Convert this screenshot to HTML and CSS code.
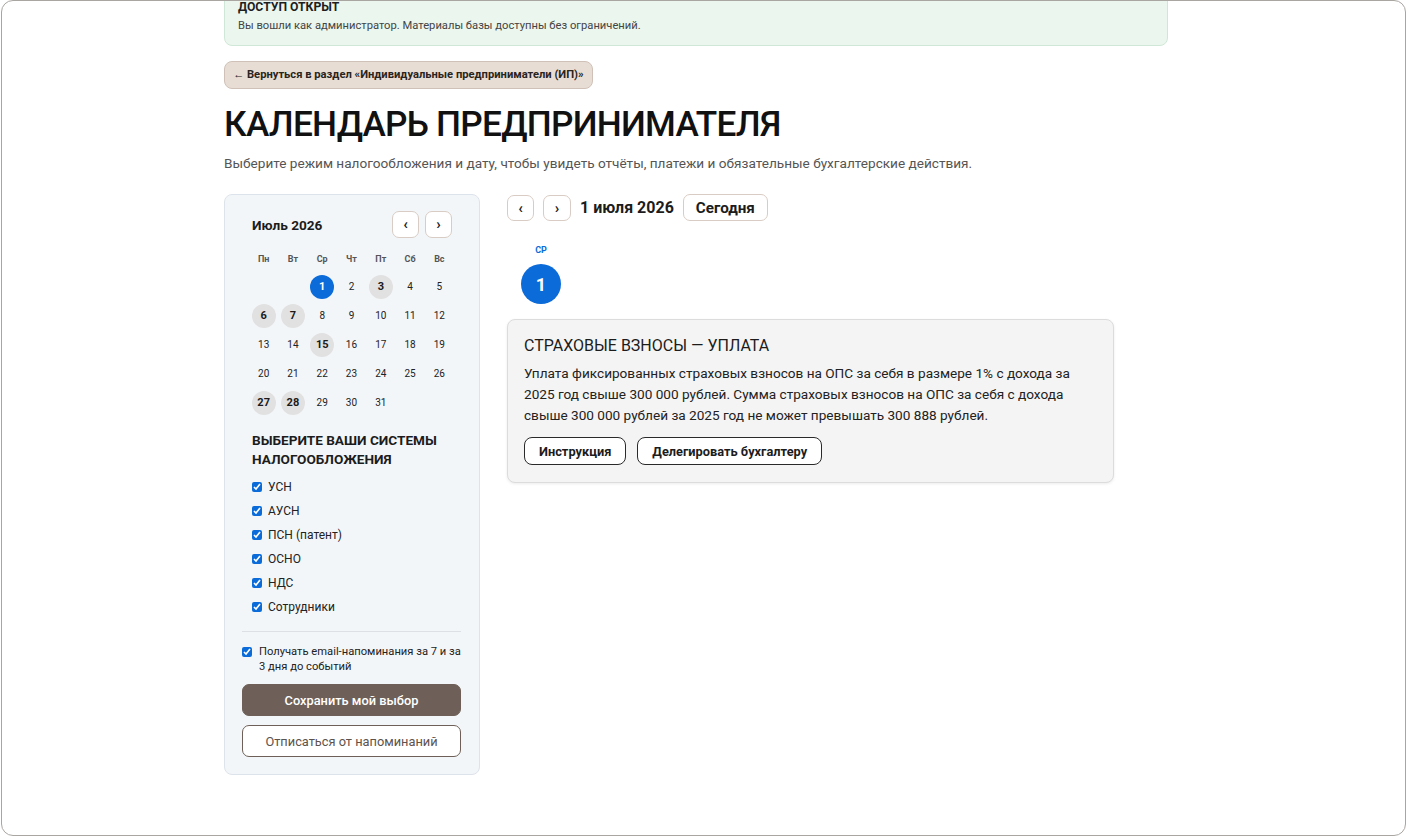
FILE: index.html
```html
<!DOCTYPE html>
<html lang="ru">
<head>
    <meta charset="UTF-8">
    <meta name="viewport" content="width=device-width, initial-scale=1.0">
    <title>Календарь предпринимателя</title>
    <link rel="stylesheet" href="styles.css">
</head>
<body>
    <div class="frame">
        <div class="page">
            <div class="notice">
                <div class="notice-title">ДОСТУП ОТКРЫТ</div>
                <div class="notice-text">Вы вошли как администратор. Материалы базы доступны без ограничений.</div>
            </div>

            <a class="back-link" href="#">← Вернуться в раздел «Индивидуальные предприниматели (ИП)»</a>

            <h1>КАЛЕНДАРЬ ПРЕДПРИНИМАТЕЛЯ</h1>
            <p class="lead">Выберите режим налогообложения и дату, чтобы увидеть отчёты, платежи и обязательные бухгалтерские действия.</p>

            <div class="layout">
                <aside class="sidebar">
                    <div class="mini-cal">
                        <div class="mini-head">
                            <span class="mini-title">Июль 2026</span>
                            <div class="mini-nav">
                                <button class="nav-btn">‹</button>
                                <button class="nav-btn">›</button>
                            </div>
                        </div>
                        <div class="mini-grid">
                            <span class="wd">Пн</span><span class="wd">Вт</span><span class="wd">Ср</span><span class="wd">Чт</span><span class="wd">Пт</span><span class="wd">Сб</span><span class="wd">Вс</span>
                            <span class="day"></span><span class="day"></span>
                            <span class="day"><b class="selected">1</b></span>
                            <span class="day">2</span>
                            <span class="day"><b class="has-event">3</b></span>
                            <span class="day">4</span><span class="day">5</span>
                            <span class="day"><b class="has-event">6</b></span>
                            <span class="day"><b class="has-event">7</b></span>
                            <span class="day">8</span><span class="day">9</span><span class="day">10</span><span class="day">11</span><span class="day">12</span>
                            <span class="day">13</span><span class="day">14</span>
                            <span class="day"><b class="has-event">15</b></span>
                            <span class="day">16</span><span class="day">17</span><span class="day">18</span><span class="day">19</span>
                            <span class="day">20</span><span class="day">21</span><span class="day">22</span><span class="day">23</span><span class="day">24</span><span class="day">25</span><span class="day">26</span>
                            <span class="day"><b class="has-event">27</b></span>
                            <span class="day"><b class="has-event">28</b></span>
                            <span class="day">29</span><span class="day">30</span><span class="day">31</span>
                        </div>
                    </div>

                    <h3 class="systems-title">ВЫБЕРИТЕ ВАШИ СИСТЕМЫ НАЛОГООБЛОЖЕНИЯ</h3>
                    <div class="systems">
                        <label><input type="checkbox" checked> УСН</label>
                        <label><input type="checkbox" checked> АУСН</label>
                        <label><input type="checkbox" checked> ПСН (патент)</label>
                        <label><input type="checkbox" checked> ОСНО</label>
                        <label><input type="checkbox" checked> НДС</label>
                        <label><input type="checkbox" checked> Сотрудники</label>
                    </div>

                    <div class="divider"></div>

                    <label class="remind"><input type="checkbox" checked> <span>Получать email-напоминания за 7 и за 3 дня до событий</span></label>

                    <button class="btn-save">Сохранить мой выбор</button>
                    <button class="btn-unsub">Отписаться от напоминаний</button>
                </aside>

                <main class="day-view">
                    <div class="day-toolbar">
                        <button class="tool-btn">‹</button>
                        <button class="tool-btn">›</button>
                        <span class="day-date">1 июля 2026</span>
                        <button class="today-btn">Сегодня</button>
                    </div>

                    <div class="day-col">
                        <div class="day-name">СР</div>
                        <div class="day-num">1</div>
                    </div>

                    <div class="event">
                        <div class="event-title">СТРАХОВЫЕ ВЗНОСЫ — УПЛАТА</div>
                        <p class="event-text">Уплата фиксированных страховых взносов на ОПС за себя в размере 1% с дохода за 2025 год свыше 300 000 рублей. Сумма страховых взносов на ОПС за себя с дохода свыше 300 000 рублей за 2025 год не может превышать 300 888 рублей.</p>
                        <div class="event-actions">
                            <button class="outline-btn">Инструкция</button>
                            <button class="outline-btn">Делегировать бухгалтеру</button>
                        </div>
                    </div>
                </main>
            </div>
        </div>
    </div>
</body>
</html>
```

FILE: styles.css
```css
* { box-sizing: border-box; }

body {
    margin: 0;
    font-family: Roboto, "Noto Sans", Arial, sans-serif;
    color: #1c1c1c;
    background: #fff;
}

.frame {
    width: 1405px;
    height: 836px;
    margin-left: 1px;
    border: 1px solid #a9a5a1;
    border-radius: 12px;
    overflow: hidden;
    background: #fff;
}

.page {
    width: 944px;
    margin-left: 222px;
    margin-top: -15px;
}

/* access banner */
.notice {
    background: #ebf6ee;
    border: 1px solid #cfe7d6;
    border-radius: 8px;
    padding: 12px 13px 11px;
}
.notice-title { font-size: 12.2px; font-weight: 700; line-height: 16px; color: #1e1e1e; }
.notice-text { font-size: 11.2px; line-height: 16px; color: #444; margin-top: 3px; }

.back-link {
    display: inline-block;
    margin-top: 15px;
    height: 28px;
    line-height: 26px;
    padding: 0 8px;
    background: #e8ddd5;
    border: 1px solid #cfc1b7;
    border-radius: 8px;
    font-size: 11.2px;
    font-weight: 700;
    color: #2a2420;
    text-decoration: none;
}

h1 {
    margin: 13px 0 0;
    font-size: 35.2px;
    line-height: 44px;
    font-weight: 500;
    color: #111;
    letter-spacing: -0.75px;
}

.lead {
    margin: 7px 0 0;
    font-size: 13.6px;
    line-height: 20px;
    color: #555;
}

.layout {
    display: flex;
    align-items: flex-start;
    gap: 27px;
    margin-top: 21px;
}

/* sidebar */
.sidebar {
    width: 256px;
    flex-shrink: 0;
    background: #f3f6f9;
    border: 1px solid #dde3ea;
    border-radius: 8px;
    padding: 16px 18px 17px 17px;
}

.mini-cal { padding: 0 7px; }
.mini-head { display: flex; justify-content: space-between; align-items: center; }
.mini-title { font-size: 13.6px; font-weight: 700; padding-left: 3px; color: #1c1c1c; }
.mini-nav { display: flex; gap: 6px; margin-right: 2px; }
.nav-btn {
    width: 27px;
    height: 27px;
    padding: 0;
    background: #fff;
    border: 1px solid #d8ccc4;
    border-radius: 7px;
    font-family: inherit;
    font-size: 15px;
    font-weight: 700;
    color: #222;
    line-height: 1;
}

.mini-grid {
    display: grid;
    grid-template-columns: repeat(7, 1fr);
    grid-template-rows: 22px repeat(5, 29px);
    margin-top: 12px;
}
.wd {
    text-align: center;
    font-size: 9px;
    font-weight: 700;
    color: #555;
    line-height: 18px;
}
.day {
    display: flex;
    align-items: center;
    justify-content: center;
    font-size: 10px;
    color: #222;
}
.day b {
    width: 24px;
    height: 24px;
    border-radius: 50%;
    display: flex;
    align-items: center;
    justify-content: center;
    font-size: 11px;
}
.day .has-event { background: #e1e1e1; color: #1a1a1a; }
.day .selected { background: #0b6bd9; color: #fff; }

.systems-title {
    margin: 14px 0 0;
    font-size: 13.6px;
    line-height: 19px;
    font-weight: 700;
    color: #1c1c1c;
    padding-left: 10px;
}

.systems { margin-top: 6px; padding-left: 10px; }
.systems label {
    display: flex;
    align-items: center;
    gap: 6px;
    height: 24px;
    font-size: 12px;
    color: #222;
}
input[type="checkbox"] {
    width: 10px;
    height: 10px;
    margin: 0;
    accent-color: #0b6bd9;
}

.divider { height: 1px; background: #dde1e6; margin-top: 12px; }

.remind {
    display: flex;
    align-items: flex-start;
    gap: 7px;
    margin-top: 12px;
    font-size: 11.2px;
    line-height: 15px;
    color: #222;
}
.remind input { margin-top: 3px; flex-shrink: 0; }

.btn-save, .btn-unsub {
    display: block;
    width: 100%;
    height: 32px;
    border-radius: 7px;
    font-family: inherit;
    font-size: 12.8px;
}
.btn-save {
    margin-top: 10px;
    background: #6e6058;
    border: 1px solid #6e6058;
    color: #fff;
    font-weight: 500;
}
.btn-unsub {
    margin-top: 9px;
    background: #fff;
    border: 1px solid #6e6058;
    color: #5d524c;
}

/* day view */
.day-view { flex: 1; }
.day-toolbar { display: flex; align-items: center; gap: 9px; }
.tool-btn {
    width: 27px;
    height: 26px;
    padding: 0;
    background: #fff;
    border: 1px solid #d8ccc4;
    border-radius: 7px;
    font-family: inherit;
    font-size: 15px;
    font-weight: 700;
    color: #222;
}
.tool-btn + .tool-btn { width: 28px; }
.day-date { font-size: 16px; font-weight: 700; color: #1c1c1c; }
.today-btn {
    height: 27px;
    padding: 0 12px;
    background: #fff;
    border: 1px solid #d8ccc4;
    border-radius: 7px;
    font-family: inherit;
    font-size: 15.2px;
    font-weight: 700;
    color: #1c1c1c;
}

.day-col { width: 68px; margin-top: 23px; text-align: center; }
.day-name { font-size: 9px; font-weight: 700; color: #0b6bd9; line-height: 12px; }
.day-num {
    width: 40px;
    height: 40px;
    margin: 8px auto 0;
    border-radius: 50%;
    background: #0b6bd9;
    color: #fff;
    font-size: 18px;
    font-weight: 700;
    display: flex;
    align-items: center;
    justify-content: center;
}

.event {
    width: 607px;
    margin-top: 15px;
    background: #f4f4f4;
    border: 1px solid #dcdcdc;
    border-radius: 8px;
    padding: 16px 16px 17px;
    box-shadow: 0 1px 3px rgba(0,0,0,0.08);
}
.event-title { font-size: 16px; line-height: 19px; color: #1c1c1c; }
.event-text { margin: 8px 0 0; font-size: 13.6px; line-height: 21px; color: #222; }
.event-actions { display: flex; gap: 11px; margin-top: 11px; }
.outline-btn {
    height: 28px;
    padding: 0 14px;
    background: #fff;
    border: 1px solid #2a2a2a;
    border-radius: 8px;
    font-family: inherit;
    font-size: 12.8px;
    font-weight: 700;
    color: #1c1c1c;
}
```
